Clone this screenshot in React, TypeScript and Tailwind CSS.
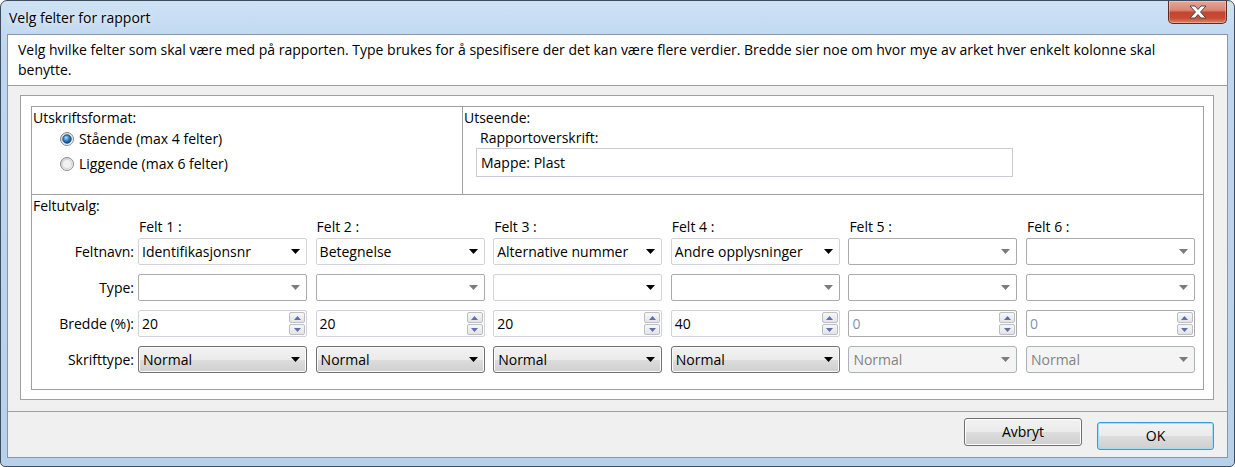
import clsx from 'clsx';

type Felt = {
  label: string;
  navn: string;
  on: boolean;
  typeOn: boolean;
  bredde: string;
};

const felter: Felt[] = [
  { label: 'Felt 1 :', navn: 'Identifikasjonsnr', on: true, typeOn: false, bredde: '20' },
  { label: 'Felt 2 :', navn: 'Betegnelse', on: true, typeOn: false, bredde: '20' },
  { label: 'Felt 3 :', navn: 'Alternative nummer', on: true, typeOn: true, bredde: '20' },
  { label: 'Felt 4 :', navn: 'Andre opplysninger', on: true, typeOn: false, bredde: '40' },
  { label: 'Felt 5 :', navn: '', on: false, typeOn: false, bredde: '0' },
  { label: 'Felt 6 :', navn: '', on: false, typeOn: false, bredde: '0' },
];

function Arrow({ gray }: { gray?: boolean }) {
  return (
    <svg width="9" height="5" viewBox="0 0 9 5" className="shrink-0">
      <path d="M0 0H9L4.5 5Z" fill={gray ? '#7b7b7b' : '#000'} />
    </svg>
  );
}

function SpinArrow({ up }: { up?: boolean }) {
  return (
    <svg width="7" height="4" viewBox="0 0 7 4">
      <path d={up ? 'M0 4H7L3.5 0Z' : 'M0 0H7L3.5 4Z'} fill="#5d70ad" />
    </svg>
  );
}

function Radio({ checked }: { checked?: boolean }) {
  const id = checked ? 'radio-on' : 'radio-off';
  return (
    <svg width="14" height="14" viewBox="0 0 14 14" className="shrink-0">
      <defs>
        <linearGradient id={`${id}-bg`} x1="0" y1="0" x2="1" y2="1">
          <stop offset="0" stopColor="#cfcfcf" />
          <stop offset="1" stopColor="#fdfdfd" />
        </linearGradient>
        <radialGradient id={`${id}-dot`} cx="0.4" cy="0.35" r="0.75">
          <stop offset="0" stopColor="#b5e3ff" />
          <stop offset="0.45" stopColor="#2c86d3" />
          <stop offset="1" stopColor="#0b3b73" />
        </radialGradient>
      </defs>
      <circle cx="7" cy="7" r="6.5" fill={`url(#${id}-bg)`} stroke="#8a8a8a" />
      <circle cx="7" cy="7" r="4.6" fill="#f1f1f1" stroke="#d0d0d0" strokeWidth="0.8" />
      {checked && (
        <circle cx="7" cy="7" r="4.2" fill={`url(#${id}-dot)`} stroke="#1b3d66" strokeWidth="0.8" />
      )}
    </svg>
  );
}

function EditCombo({ value, on }: { value: string; on: boolean }) {
  return (
    <div
      className={clsx(
        'flex h-[27px] items-center rounded-[2px] border bg-white pl-[3px] pr-[6px]',
        on ? 'border-[#d0d3d9]' : 'border-[#ababab]'
      )}
    >
      <span className="flex-1 truncate">{value}</span>
      <Arrow gray={!on} />
    </div>
  );
}

function SpinBox({ value, on }: { value: string; on: boolean }) {
  return (
    <div
      className={clsx(
        'flex h-[27px] items-center rounded-[2px] border bg-white pl-[3px] pr-[1px]',
        on ? 'border-[#d0d3d9]' : 'border-[#ababab]'
      )}
    >
      <span className={clsx('flex-1', !on && 'text-[#8893a8]')}>{value}</span>
      <div className="flex h-[23px] w-[16px] flex-col gap-[1px]">
        <div className="flex flex-1 items-center justify-center rounded-[2px] border border-[#b9bec7] bg-[linear-gradient(180deg,#f7f7f7,#e4e4e4)]">
          <SpinArrow up />
        </div>
        <div className="flex flex-1 items-center justify-center rounded-[2px] border border-[#b9bec7] bg-[linear-gradient(180deg,#f7f7f7,#e4e4e4)]">
          <SpinArrow />
        </div>
      </div>
    </div>
  );
}

function FontCombo({ on }: { on: boolean }) {
  return (
    <div
      className={clsx(
        'flex h-[27px] items-center rounded-[3px] border pl-[4px] pr-[6px]',
        on
          ? 'border-[#707070] bg-[linear-gradient(180deg,#f2f2f2_0%,#ebebeb_50%,#dddddd_50%,#cfcfcf_100%)] shadow-[inset_0_0_0_1px_#fcfcfc]'
          : 'border-[#adb2b5] bg-[#f4f4f4] text-[#838383]'
      )}
    >
      <span className="flex-1">Normal</span>
      <Arrow gray={!on} />
    </div>
  );
}

function Row({ label, children }: { label: string; children: React.ReactNode }) {
  return (
    <div className="flex items-center">
      <div className="w-[102px] text-right">{label}</div>
      <div className="ml-[4px] grid grid-cols-[repeat(6,169px)] gap-x-[8.6px]">{children}</div>
    </div>
  );
}

export default function App() {
  return (
    <div className="flex h-[467px] w-[1235px] flex-col overflow-hidden rounded-t-[7px] rounded-b-[5px] border border-[#3e4d5e] bg-[linear-gradient(180deg,#cfe2f5_0%,#bed6ef_10%,#b8d1eb_100%)] font-['Open_Sans',sans-serif] text-[14px] leading-[20px] text-black">
      {/* title bar */}
      <div className="flex h-[33px] shrink-0 items-start justify-between pl-[8px] pr-[7px]">
        <div className="mt-[7px] [text-shadow:0_0_6px_rgba(255,255,255,0.95)]">Velg felter for rapport</div>
        <div className="flex h-[23px] w-[59px] items-center justify-center rounded-b-[5px] border border-t-0 border-[#5e2a21] bg-[linear-gradient(180deg,#e6a697_0%,#d98572_42%,#c3452e_52%,#c74c33_78%,#dc8466_100%)] shadow-[inset_0_0_0_1px_rgba(255,255,255,0.3)]">
          <svg width="18" height="14" viewBox="0 0 18 14">
            <path
              d="M1 1H6L9 4.5L12 1H17L11.5 7L17 13H12L9 9.5L6 13H1L6.5 7Z"
              fill="#fff"
              stroke="#4a4a4a"
              strokeWidth="1"
              strokeLinejoin="round"
            />
          </svg>
        </div>
      </div>

      {/* client area */}
      <div className="mx-[6px] flex h-[424px] shrink-0 flex-col border border-[#8796a8] bg-[#f0f0f0]">
        <div className="h-[51px] shrink-0 border-b border-[#a0a0a0] bg-white pl-[10px] pt-[5px]">
          <div className="whitespace-nowrap">
            Velg hvilke felter som skal være med på rapporten. Type brukes for å spesifisere der det kan være flere verdier. Bredde sier noe om hvor mye av arket hver enkelt kolonne skal
          </div>
          <div>benytte.</div>
        </div>

        <div className="ml-[12px] mr-[13px] mt-[9px] border border-[#a0a0a0] bg-white pb-[9px] pl-[10px] pr-[9px] pt-[10px]">
          <div className="border border-[#a0a0a0]">
            <div className="flex h-[88px] border-b border-[#a0a0a0]">
              <div className="w-[431px] border-r border-[#a0a0a0] pl-[1px] pt-[1px]">
                <div>Utskriftsformat:</div>
                <div className="ml-[27px] mt-[1px] flex flex-col gap-[5px]">
                  <div className="flex items-center gap-[5px]">
                    <Radio checked />
                    <span>Stående (max 4 felter)</span>
                  </div>
                  <div className="flex items-center gap-[5px]">
                    <Radio />
                    <span>Liggende (max 6 felter)</span>
                  </div>
                </div>
              </div>
              <div className="flex-1 pl-[1px] pt-[1px]">
                <div>Utseende:</div>
                <div className="ml-[16px]">Rapportoverskrift:</div>
                <div className="ml-[12px] flex h-[29px] w-[537px] items-center border border-[#c9ccd2] bg-white pl-[4px]">
                  Mappe: Plast
                </div>
              </div>
            </div>

            <div className="flex flex-col pb-[16px] pl-[1px] pt-[1px]">
              <div>Feltutvalg:</div>
              <div className="mt-[1px]">
                <Row label="">
                  {felter.map((f) => (
                    <div key={f.label}>{f.label}</div>
                  ))}
                </Row>
              </div>
              <div className="-ml-[1px] mt-[1px] flex flex-col gap-[9px]">
                <Row label="Feltnavn:">
                  {felter.map((f) => (
                    <EditCombo key={f.label} value={f.navn} on={f.on} />
                  ))}
                </Row>
                <Row label="Type:">
                  {felter.map((f) => (
                    <EditCombo key={f.label} value="" on={f.typeOn} />
                  ))}
                </Row>
                <Row label="Bredde (%):">
                  {felter.map((f) => (
                    <SpinBox key={f.label} value={f.bredde} on={f.on} />
                  ))}
                </Row>
                <Row label="Skrifttype:">
                  {felter.map((f) => (
                    <FontCombo key={f.label} on={f.on} />
                  ))}
                </Row>
              </div>
            </div>
          </div>
        </div>

        <div className="mt-[11px] flex flex-1 items-start justify-end gap-[15px] border-t border-[#a0a0a0] pr-[13px] pt-[6px]">
          <button className="flex h-[28px] w-[118px] items-center justify-center rounded-[3px] border border-[#707070] bg-[linear-gradient(180deg,#f2f2f2_0%,#ebebeb_50%,#dddddd_50%,#cfcfcf_100%)] shadow-[inset_0_0_0_1px_#fcfcfc]">
            Avbryt
          </button>
          <button className="mt-[4px] flex h-[28px] w-[117px] items-center justify-center rounded-[3px] border border-[#3c9bd4] bg-[linear-gradient(180deg,#f2f2f2_0%,#ebebeb_50%,#dddddd_50%,#cfcfcf_100%)] shadow-[inset_0_0_0_1px_#9fdcf7]">
            OK
          </button>
        </div>
      </div>
    </div>
  );
}
